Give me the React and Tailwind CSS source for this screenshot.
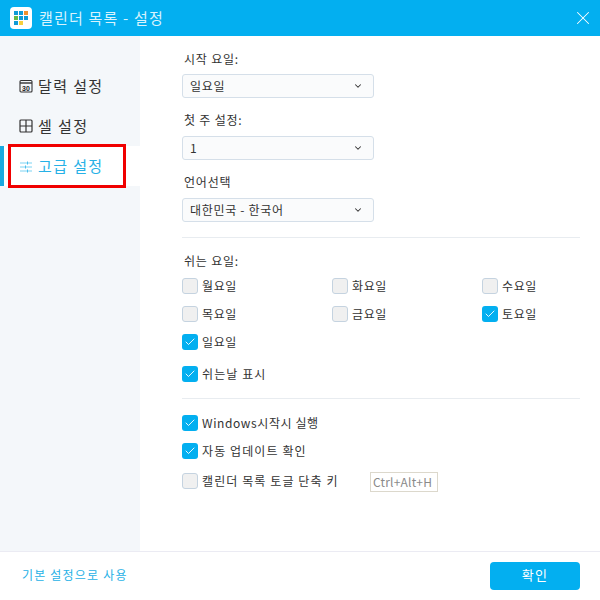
import React from "react";
import { ChevronDown, X, Check } from "lucide-react";

const Logo = () => (
  <div className="flex h-[22px] w-[22px] items-center justify-center rounded-[4px] bg-white">
    <svg width="16" height="16" viewBox="0 0 16 16">
      <rect x="1" y="1" width="4" height="4" fill="#0f9bd7" />
      <rect x="6" y="1" width="4" height="4" fill="#0f9bd7" />
      <rect x="11" y="1" width="4" height="4" fill="#f0902c" />
      <rect x="1" y="6" width="4" height="4" fill="#62b946" />
      <rect x="6" y="6" width="4" height="4" fill="#0f9bd7" />
      <rect x="11" y="6" width="4" height="4" fill="#0f9bd7" />
      <rect x="1" y="11" width="4" height="4" fill="#0f9bd7" />
      <rect x="6" y="11" width="4" height="4" fill="#f7cf3d" />
    </svg>
  </div>
);

const CalendarIcon = () => (
  <svg width="14" height="14" viewBox="0 0 14 14" fill="none">
    <rect x="1" y="1.500" width="12" height="11.500" rx="1" stroke="#333" strokeWidth="1.1" />
    <path d="M1 4h12" stroke="#333" strokeWidth="1.4" />
    <text x="7" y="11.500" textAnchor="middle" fontSize="7" fontWeight="700" fill="#222" fontFamily="Liberation Sans">30</text>
  </svg>
);

const GridIcon = () => (
  <svg width="14" height="14" viewBox="0 0 14 14" fill="none" stroke="#333" strokeWidth="1.2">
    <rect x="1" y="1" width="12" height="12" rx="1" />
    <path d="M7 1v12M1 7h12" />
  </svg>
);

const SlidersIcon = () => (
  <svg width="14" height="14" viewBox="0 0 14 14" fill="none">
    <path d="M1 4h12M1 8h12M1 12h12" stroke="#a8e2f8" strokeWidth="1.6" />
    <path d="M8.500 2.500v3M6.500 6.500v3M8.500 10.500v3" stroke="#4fbfec" strokeWidth="1" />
  </svg>
);

const NavItem = ({ icon, label, active }) => (
  <div className={`flex h-10 items-center gap-[5px] pl-[19px] ${active ? "relative bg-white text-[#27b1e6]" : "text-[#333]"}`}>
    {active && <div className="absolute left-0 top-0 h-full w-1 bg-[#19a9e0]" />}
    {icon}
    <span className="text-[15px] tracking-[1.4px]">{label}</span>
  </div>
);

const SelectBox = ({ value }) => (
  <div className="flex h-6 w-[192px] items-center justify-between rounded-[3px] border border-[#d5dfe9] bg-[#fafbfc] pl-[7px] pr-[10px] text-[12px] tracking-[0.7px] text-[#333]">
    <span>{value}</span>
    <ChevronDown size={10} strokeWidth={2.5} color="#333" />
  </div>
);

const CheckItem = ({ label, checked, wide }) => (
  <div className="flex h-4 items-center gap-[4px]">
    {checked ? (
      <div className="flex h-4 w-4 items-center justify-center rounded-[3px] bg-[#03aff0]">
        <Check size={12} strokeWidth={1.8} color="#fff" />
      </div>
    ) : (
      <div className="h-4 w-4 rounded-[3px] border border-[#c5d3e0] bg-[#f0f0f0]" />
    )}
    <span className={`text-[12px] text-[#333] ${wide ? "tracking-[1.1px]" : "tracking-[0.6px]"}`}>{label}</span>
  </div>
);

const days = [
  ["월요일", false],
  ["화요일", false],
  ["수요일", false],
  ["목요일", false],
  ["금요일", false],
  ["토요일", true],
  ["일요일", true],
];

export default function App() {
  return (
    <div className="relative flex h-[600px] w-[600px] flex-col bg-white font-['Noto_Sans_CJK_KR','Noto_Sans',sans-serif]">
      <header className="flex h-9 shrink-0 items-center justify-between bg-[#03aff0] pl-[10px] pr-[6px] text-white">
        <div className="flex items-center gap-[7px]">
          <Logo />
          <span className="text-[15px] tracking-[1.2px] text-[#d8f3fd]">캘린더 목록 - 설정</span>
        </div>
        <X size={22} strokeWidth={1.1} color="#fff" />
      </header>

      <div className="flex min-h-0 flex-1">
        <aside className="w-[140px] shrink-0 bg-[#f4f7fa] pt-[30px]">
          <NavItem icon={<CalendarIcon />} label="달력 설정" />
          <NavItem icon={<GridIcon />} label="셀 설정" />
          <NavItem icon={<SlidersIcon />} label="고급 설정" active />
        </aside>

        <main className="flex-1 pl-[42px] pr-[20px] pt-[12px] text-[12px] text-[#333]">
          <div className="flex h-[22px] items-center pl-[2px] tracking-[0.8px]">시작 요일:</div>
          <div className="mt-[4px]"><SelectBox value="일요일" /></div>
          <div className="mt-[11px] flex h-[22px] items-center pl-[2px] tracking-[0.8px]">첫 주 설정:</div>
          <div className="mt-[5px]"><SelectBox value="1" /></div>
          <div className="mt-[11px] flex h-[22px] items-center pl-[2px] tracking-[0.8px]">언어선택</div>
          <div className="mt-[5px]"><SelectBox value="대한민국 - 한국어" /></div>

          <div className="mt-[15px] border-t border-[#e8ecf0]" />

          <div className="mt-[13px] flex h-[20px] items-center pl-[2px] tracking-[0.8px]">쉬는 요일:</div>
          <div className="mt-[7px] grid grid-cols-[150px_150px_auto] gap-y-[12px]">
            {days.map(([label, checked]) => (
              <CheckItem key={label} label={label} checked={checked} />
            ))}
          </div>
          <div className="mt-[16px]"><CheckItem label="쉬는날 표시" checked wide /></div>

          <div className="mt-[16px] border-t border-[#e8ecf0]" />

          <div className="mt-[16px]"><CheckItem label="Windows시작시 실행" checked /></div>
          <div className="mt-[12px]"><CheckItem label="자동 업데이트 확인" checked wide /></div>
          <div className="mt-[13px] flex h-[20px] items-start">
            <div className="w-[188px] pt-px"><CheckItem label="캘린더 목록 토글 단축 키" wide /></div>
            <div className="flex h-[20px] w-[68px] items-center border border-[#dcd8cc] pl-[2px] text-[12px] tracking-[0.2px] text-[#8a8a8a]">Ctrl+Alt+H</div>
          </div>
        </main>
      </div>

      <footer className="flex h-[49px] shrink-0 items-center justify-between border-t border-[#ebebf3] pl-[22px] pr-[20px]">
        <span className="pb-[2px] text-[12px] tracking-[1.2px] text-[#27b1e6]">기본 설정으로 사용</span>
        <button className="h-7 w-[90px] rounded-[4px] bg-[#03aff0] pb-[2px] text-[13px] tracking-[1.2px] text-white">확인</button>
      </footer>

      <div className="absolute left-[8px] top-[144px] h-[44px] w-[118px] border-[3px] border-[#f00000]" />
    </div>
  );
}
